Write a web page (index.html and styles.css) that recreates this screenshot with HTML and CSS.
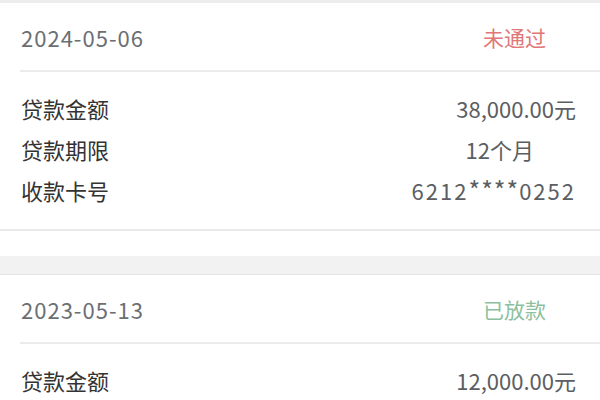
FILE: index.html
```html
<!DOCTYPE html>
<html lang="zh-CN">

<head>
    <meta charset="UTF-8">
    <meta name="viewport" content="width=device-width, initial-scale=1.0">
    <title>借款记录</title>
    <link rel="stylesheet" href="styles.css">
</head>

<body>
    <div class="top-line"></div>

    <div class="card">
        <div class="card-head">
            <span class="date">2024-05-06</span>
            <span class="status fail">未通过</span>
        </div>
        <div class="card-body">
            <div class="row">
                <span class="label">贷款金额</span>
                <span class="value">38,000.00元</span>
            </div>
            <div class="row">
                <span class="label">贷款期限</span>
                <span class="value term">12个月</span>
            </div>
            <div class="row">
                <span class="label">收款卡号</span>
                <span class="value card-no">6212<span class="mask">****</span>0252</span>
            </div>
        </div>
    </div>

    <div class="gap"></div>

    <div class="card">
        <div class="card-head">
            <span class="date">2023-05-13</span>
            <span class="status ok">已放款</span>
        </div>
        <div class="card-body">
            <div class="row">
                <span class="label">贷款金额</span>
                <span class="value">12,000.00元</span>
            </div>
        </div>
    </div>
</body>

</html>
```

FILE: styles.css
```css
body {
    margin: 0;
    background: #fff;
    font-family: "Noto Sans CJK SC", "Noto Sans", sans-serif;
    font-size: 22px;
}

.top-line {
    height: 3px;
    background: #ededed;
}

.card {
    background: #fff;
    border-bottom: 2px solid #e9e9e9;
}

.card-head {
    height: 67px;
    margin-left: 20px;
    padding: 0 54px 0 1px;
    display: flex;
    align-items: center;
    justify-content: space-between;
    border-bottom: 2px solid #ebebeb;
}

.date {
    color: #6b6f73;
    letter-spacing: 1px;
}

.status {
    font-size: 21px;
}

.status.fail {
    color: #e07676;
}

.status.ok {
    color: #8cbf9f;
}

.card-body {
    padding: 15px 24px 19px 21px;
}

.row {
    height: 41px;
    display: flex;
    align-items: center;
    justify-content: space-between;
}

.label {
    color: #333;
}

.value {
    color: #5b5e62;
}

.value.term {
    padding-right: 42px;
}

.card-no {
    letter-spacing: 2px;
}

.mask {
    font-size: 25px;
    line-height: 1;
    letter-spacing: 1px;
}

.gap {
    margin-top: 25px;
    height: 18px;
    background: #f2f2f2;
    border-bottom: 1px solid #e6e6e6;
}
```
